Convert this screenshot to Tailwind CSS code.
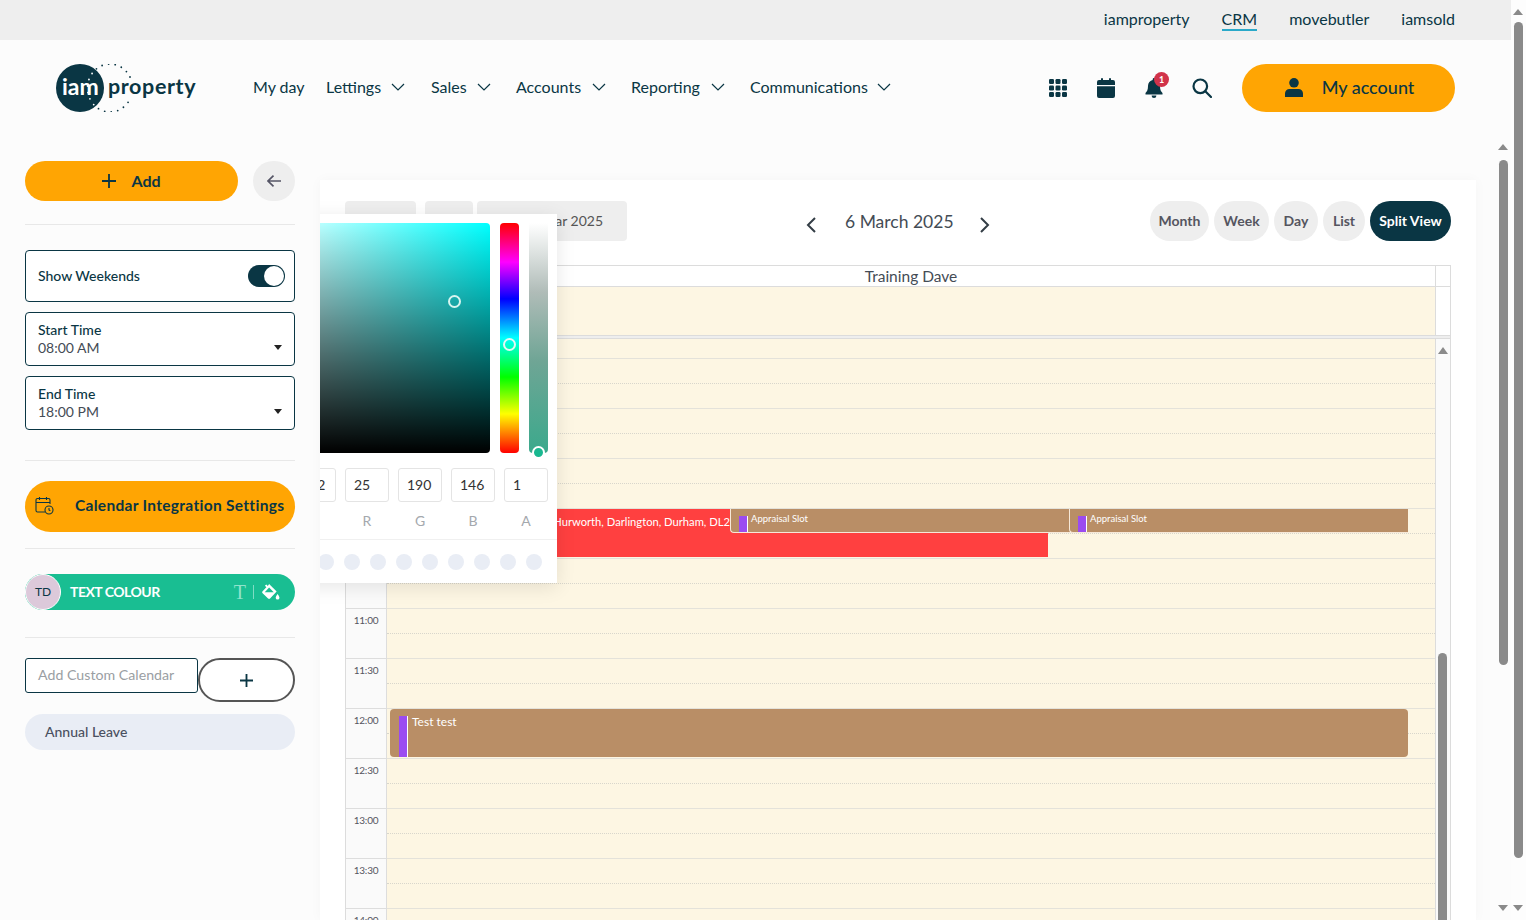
<!DOCTYPE html>
<html lang="en">
<head>
  <meta charset="UTF-8" />
  <meta name="viewport" content="width=device-width, initial-scale=1.0" />
  <title>iamproperty CRM - Calendar</title>
  <script src="https://cdn.jsdelivr.net/npm/@tailwindcss/browser@4"></script>
</head>
<body class="h-[920px] overflow-hidden bg-[#fcfcfc] text-[#0a3644] font-[Lato,sans-serif]">
<div class="flex h-[920px]">
  <div class="w-[1511px] flex flex-col shrink-0">
    <!-- top strip -->
    <div class="h-10 bg-[#eeeeee] flex justify-end items-center gap-8 pr-14 pb-0.5 text-base shrink-0">
      <a>iamproperty</a>
      <a class="relative">CRM<span class="absolute left-0 right-0 top-[22px] h-0.5 bg-[#2aa9c9]"></span></a>
      <a>movebutler</a>
      <a>iamsold</a>
    </div>
    <!-- main nav -->
    <div class="h-24 flex items-center pl-14 pr-14 shrink-0">
      <svg class="w-[145px] h-12 shrink-0" viewBox="56 64 145 48">
        <defs><clipPath id="logoClip"><circle cx="80" cy="88" r="24" /></clipPath></defs>
        <path d="M130 77A22.500 24 0 1 0 130 99" fill="none" stroke="#0a3644" stroke-width="1.800" stroke-linecap="round" stroke-dasharray="0 6.600" />
        <circle cx="80" cy="88" r="24" fill="#0a3644" />
        <path clip-path="url(#logoClip)" d="M130 77A22.500 24 0 1 0 130 99" fill="none" stroke="#fff" stroke-width="1.800" stroke-linecap="round" stroke-dasharray="0 6.600" />
        <text x="62" y="95" fill="#fff" font-size="23" font-weight="700" font-family="Lato, sans-serif">iam</text>
        <text x="108" y="94" fill="#0a3644" font-size="21.500" font-weight="700" letter-spacing="0.600" font-family="Lato, sans-serif">property</text>
      </svg>
      <nav class="flex items-center ml-[52px] text-base -mt-0.5 whitespace-nowrap">
        <a class="w-[73px]">My day</a>
        <a class="flex items-center"><span class="w-[57px]">Lettings</span><svg class="w-3.5 h-2 ml-2 mr-[26px]" viewBox="0 0 14 8" fill="none" stroke="#0a3644" stroke-width="1.200"><path d="M1 1l6 6 6-6" /></svg></a>
        <a class="flex items-center"><span class="w-[37px]">Sales</span><svg class="w-3.5 h-2 ml-[9px] mr-[25px]" viewBox="0 0 14 8" fill="none" stroke="#0a3644" stroke-width="1.200"><path d="M1 1l6 6 6-6" /></svg></a>
        <a class="flex items-center"><span class="w-[67px]">Accounts</span><svg class="w-3.5 h-2 ml-[9px] mr-[25px]" viewBox="0 0 14 8" fill="none" stroke="#0a3644" stroke-width="1.200"><path d="M1 1l6 6 6-6" /></svg></a>
        <a class="flex items-center"><span class="w-[71px]">Reporting</span><svg class="w-3.5 h-2 ml-[9px] mr-[25px]" viewBox="0 0 14 8" fill="none" stroke="#0a3644" stroke-width="1.200"><path d="M1 1l6 6 6-6" /></svg></a>
        <a class="flex items-center"><span class="w-[118px]">Communications</span><svg class="w-3.5 h-2 ml-[9px]" viewBox="0 0 14 8" fill="none" stroke="#0a3644" stroke-width="1.200"><path d="M1 1l6 6 6-6" /></svg></a>
      </nav>
      <div class="ml-auto flex items-center gap-7">
        <div class="w-5 h-5 flex items-center justify-center">
          <svg class="w-[18px] h-[18px]" viewBox="0 0 18 18" fill="#0a3644"><rect x="0" y="0" width="5" height="5" rx="1.200" /><rect x="6.500" y="0" width="5" height="5" rx="1.200" /><rect x="13" y="0" width="5" height="5" rx="1.200" /><rect x="0" y="6.500" width="5" height="5" rx="1.200" /><rect x="6.500" y="6.500" width="5" height="5" rx="1.200" /><rect x="13" y="6.500" width="5" height="5" rx="1.200" /><rect x="0" y="13" width="5" height="5" rx="1.200" /><rect x="6.500" y="13" width="5" height="5" rx="1.200" /><rect x="13" y="13" width="5" height="5" rx="1.200" /></svg>
        </div>
        <div class="w-5 h-5 flex items-center justify-center">
          <svg class="w-[18px] h-5" viewBox="0 0 18 20" fill="#0a3644"><rect x="4" y="0" width="2" height="4" rx="1" /><rect x="12" y="0" width="2" height="4" rx="1" /><path d="M2 2h14a2 2 0 0 1 2 2v3H0V4a2 2 0 0 1 2-2zM0 8.200h18V18a2 2 0 0 1-2 2H2a2 2 0 0 1-2-2z" /></svg>
        </div>
        <div class="relative w-5 h-5 flex items-center justify-center">
          <svg class="w-[18px] h-5" viewBox="0 0 18 20" fill="#0a3644"><path d="M9 0a1.300 1.300 0 0 1 1.300 1.300v.8C13 2.700 15 5 15 8c0 4 1 5.500 2.500 7v1.500H.5V15C2 13.500 3 12 3 8c0-3 2-5.300 4.700-5.900v-.8A1.300 1.300 0 0 1 9 0zM6.700 17.500h4.600A2.300 2.300 0 0 1 9 20a2.300 2.300 0 0 1-2.300-2.500z" /></svg>
          <span class="absolute -top-[6px] left-[10px] w-[15px] h-[15px] rounded-full bg-[#d1334a] text-white text-[9px] font-bold flex items-center justify-center">1</span>
        </div>
        <svg class="w-5 h-5" viewBox="0 0 20 20" fill="none" stroke="#0a3644" stroke-width="2.200"><circle cx="8.300" cy="8.300" r="6.800" /><path d="M13.300 13.300l5.700 5.700" stroke-linecap="round" /></svg>
        <button class="w-[213px] h-12 ml-[2px] pl-0.5 pb-0.5 rounded-full bg-[#ffa503] flex items-center justify-center gap-[19px] text-lg font-medium">
          <svg class="w-[18px] h-[19px]" viewBox="0 0 18 19" fill="#0a3644"><circle cx="9" cy="4.800" r="4.800" /><path d="M4.500 11h9a4.500 4.500 0 0 1 4.500 4.500V19H0v-3.500A4.500 4.500 0 0 1 4.500 11z" /></svg>
          My account
        </button>
      </div>
    </div>
    <!-- body -->
    <div class="flex flex-1 min-h-0">
      <!-- sidebar -->
      <aside class="w-80 shrink-0 pl-[25px] pr-[25px] pt-[25px]">
        <div class="flex items-center gap-[15px]">
          <button class="w-[213px] h-10 rounded-full bg-[#ffa503] flex items-center justify-center gap-[15px] font-bold text-base">
            <svg class="w-3.5 h-3.5" viewBox="0 0 14 14" stroke="#0a3644" stroke-width="1.800"><path d="M7 0v14M0 7h14" /></svg>
            Add
          </button>
          <button class="w-[42px] h-10 rounded-full bg-[#eeeeee] flex items-center justify-center">
            <svg class="w-3.5 h-3" viewBox="0 0 14 12" fill="none" stroke="#555566" stroke-width="1.700"><path d="M14 6H1M6.500.7L1 6l5.500 5.300" /></svg>
          </button>
        </div>
        <div class="h-px bg-[#e8e8e8] mt-[23px]"></div>
        <div class="mt-[25px] h-[52px] border border-[#0a3644] rounded flex items-center justify-between pl-3 pr-[9px] bg-white text-sm font-medium">
          Show Weekends
          <span class="w-[37px] h-[22px] rounded-full bg-[#0a3644] relative"><span class="absolute right-px top-px w-5 h-5 rounded-full bg-white"></span></span>
        </div>
        <div class="mt-[10px] h-[54px] border border-[#0a3644] rounded flex items-center justify-between pl-3 pr-3 bg-white">
          <div class="text-sm leading-[18px]"><div class="font-medium">Start Time</div><div class="text-[#444c55]">08:00 AM</div></div>
          <span class="mt-4 w-0 h-0 border-l-4 border-r-4 border-t-[5px] border-l-transparent border-r-transparent border-t-[#222222]"></span>
        </div>
        <div class="mt-[10px] h-[54px] border border-[#0a3644] rounded flex items-center justify-between pl-3 pr-3 bg-white">
          <div class="text-sm leading-[18px]"><div class="font-medium">End Time</div><div class="text-[#444c55]">18:00 PM</div></div>
          <span class="mt-4 w-0 h-0 border-l-4 border-r-4 border-t-[5px] border-l-transparent border-r-transparent border-t-[#222222]"></span>
        </div>
        <div class="h-px bg-[#e8e8e8] mt-[30px]"></div>
        <button class="mt-5 w-[270px] h-[51px] rounded-full bg-[#ffa503] flex items-center pl-[10px] pb-0.5 gap-[21px] font-bold text-[15.5px] tracking-[0.3px] whitespace-nowrap">
          <svg class="w-[19px] h-[19px] shrink-0" viewBox="0 0 19 19" fill="none" stroke="#0a3644" stroke-width="1.100"><path d="M10 16H2.500A1.500 1.500 0 0 1 1 14.500V4a1.500 1.500 0 0 1 1.500-1.500h11A1.500 1.500 0 0 1 15 4v4M1 6.500h14M4.500 1v3M11.500 1v3" /><circle cx="14" cy="14" r="4" /><path d="M14 12v2l1.300.8" /></svg>
          Calendar Integration Settings
        </button>
        <div class="h-px bg-[#e8e8e8] mt-4"></div>
        <div class="mt-[25px] h-9 rounded-full bg-[#19be92] relative flex items-center pl-[45px] pr-[15px] text-white">
          <span class="absolute left-0 top-0 w-9 h-9 rounded-full bg-[#dcc9da] border border-white text-[#0a3644] text-xs flex items-center justify-center">TD</span>
          <span class="font-bold text-sm tracking-[-0.5px]">TEXT COLOUR</span>
          <span class="ml-auto font-['Liberation_Serif'] text-xl text-[#8fe3cb]">T</span>
          <span class="w-px h-3.5 bg-[#7fdcc3] ml-[7px] mr-2"></span>
          <svg class="w-[18px] h-[16px]" viewBox="0 0 19 17" fill="#fff"><path d="M7.500 0l8 8-7 7.500a1.500 1.500 0 0 1-2.100 0L.6 9.700a1.500 1.500 0 0 1 0-2.100L4.600 3.500 3 1.800 4.500.4l1.600 1.700z" /><path d="M2.800 8.700h9.600L7.500 3.800z" fill="#19be92" /><path d="M16.500 10.500c1 1.600 2 2.800 2 4a2 2 0 0 1-4 0c0-1.200 1-2.400 2-4z" /></svg>
        </div>
        <div class="h-px bg-[#e8e8e8] mt-[27px]"></div>
        <div class="mt-5 flex items-start">
          <div class="w-[173px] h-[35px] border border-[#0a3644] rounded-[3px] bg-white flex items-center pl-3 pb-0.5 text-[14.2px] text-[#9a9ea3] shrink-0 whitespace-nowrap">Add Custom Calendar</div>
          <button class="w-[97px] h-11 rounded-full border-2 border-[#555555] bg-white flex items-center justify-center">
            <svg class="w-[13px] h-[13px]" viewBox="0 0 12 12" stroke="#0a3644" stroke-width="1.700"><path d="M6 0v12M0 6h12" /></svg>
          </button>
        </div>
        <div class="mt-3 h-9 rounded-full bg-[#e9edf5] flex items-center pl-5 text-sm text-[#4a5060] font-medium">Annual Leave</div>
      </aside>
      <!-- calendar panel -->
      <main class="w-[1156px] shrink-0 mt-11 bg-white pt-[21px] pl-[25px] pr-[25px] relative overflow-hidden flex flex-col shadow-[0_0_12px_rgba(0,0,0,0.03)]">
        <div class="h-10 relative flex items-center shrink-0">
          <div class="flex gap-[4px] text-sm text-[#555555]">
            <span class="w-[71px] h-10 rounded-sm bg-[#eeeeee] mr-[5px]"></span>
            <span class="w-12 h-10 rounded-sm bg-[#eeeeee]"></span>
            <span class="w-[150px] h-10 rounded-sm bg-[#eeeeee] flex items-center justify-end pr-6">Year 2025</span>
          </div>
          <div class="absolute left-[461px] top-0 h-10 flex items-center text-[#444c55]">
            <svg class="w-[10px] h-4 mt-[7px]" viewBox="0 0 10 16" fill="none" stroke="#333d45" stroke-width="2"><path d="M9 1L2 8l7 7" /></svg>
            <span class="ml-[29px] mt-0.5 text-[17.5px]">6 March 2025</span>
            <svg class="w-[10px] h-4 mt-[7px] ml-[26px]" viewBox="0 0 10 16" fill="none" stroke="#333d45" stroke-width="2"><path d="M1 1l7 7-7 7" /></svg>
          </div>
          <div class="ml-auto flex gap-[5px] text-sm font-bold text-[#555560]">
            <button class="w-[59px] h-10 rounded-full bg-[#eeeeee]">Month</button>
            <button class="w-[55px] h-10 rounded-full bg-[#eeeeee]">Week</button>
            <button class="w-11 h-10 rounded-full bg-[#eeeeee]">Day</button>
            <button class="w-[42px] h-10 rounded-full bg-[#eeeeee]">List</button>
            <button class="w-[81px] h-10 rounded-full bg-[#0a3644] text-white">Split View</button>
          </div>
        </div>
        <!-- grid -->
        <div class="mt-6 border-l border-r border-[#dcdcdc] flex flex-col flex-1 min-h-0">
          <div class="h-[22px] border-t border-b border-[#dcdcdc] flex shrink-0">
            <div class="flex-1 pl-[41px] text-center text-[15.5px] leading-[21px] text-[#444c55]">Training Dave</div>
            <div class="w-[15px] border-l border-[#dcdcdc]"></div>
          </div>
          <div class="h-12 flex shrink-0">
            <div class="flex-1 bg-[#fdf6e3]"></div>
            <div class="w-[15px] border-l border-[#dcdcdc]"></div>
          </div>
          <div class="h-1 bg-[#eeeeee] border-t border-b border-[#dcdcdc] shrink-0"></div>
          <div class="flex flex-1 min-h-0">
            <div class="flex-1 overflow-hidden">
              <div id="slots" class="-mt-[31px] relative">
                <div class="absolute left-[44px] top-[201px] w-[658px] h-12 bg-[#ff4040] text-white text-[11.2px]">
                  <div class="w-[340px] pt-[5px] text-right whitespace-nowrap overflow-hidden">Hurworth, Darlington, Durham, DL2</div>
                </div>
                <div class="absolute left-[384px] top-[201px] w-[340px] h-6 bg-[#b98e66] border-l border-b border-[#f6e8d8] rounded-bl-sm flex text-white text-[9.500px]">
                  <span class="ml-[8px] mt-[7px] w-[9px] h-4 bg-[#9b4bf0] border-r border-white"></span><span class="ml-[3px] mt-[3px]">Appraisal Slot</span>
                </div>
                <div class="absolute left-[723px] top-[201px] w-[339px] h-6 bg-[#b98e66] border-l border-b border-[#f6e8d8] rounded-bl-sm flex text-white text-[9.500px]">
                  <span class="ml-[8px] mt-[7px] w-[9px] h-4 bg-[#9b4bf0] border-r border-white"></span><span class="ml-[3px] mt-[3px]">Appraisal Slot</span>
                </div>
                <div class="absolute left-[44px] top-[401px] w-[1018px] h-12 bg-[#b98e66] rounded-sm flex text-white text-xs">
                  <span class="ml-[9px] mt-[7px] w-[9px] h-[41px] bg-[#9b4bf0] border-r border-white"></span><span class="ml-1 mt-[5px]">Test test</span>
                </div>
              </div>
            </div>
            <div class="w-[15px] border-l border-[#dcdcdc] bg-[#fafafa] relative shrink-0">
              <span class="absolute left-[2px] top-[8px] w-0 h-0 border-l-[5px] border-r-[5px] border-b-[7px] border-l-transparent border-r-transparent border-b-[#8a8a8a]"></span>
              <span class="absolute left-[2px] top-[314px] w-[9px] h-[300px] rounded-full bg-[#8a8a8a]"></span>
            </div>
          </div>
        </div>
        <!-- colour picker popover, runs in behind the sidebar edge -->
        <div class="absolute left-[-75px] top-[34px] w-[312px] h-[369px] bg-white shadow-[0_4px_18px_rgba(0,0,0,0.10)] px-[9px] pt-[9px]">
          <div class="flex gap-[10px]">
            <div class="w-[236px] h-[230px] rounded-sm relative bg-[linear-gradient(to_top,#000,transparent),linear-gradient(to_right,#fff,#00ffff)]">
              <span class="absolute left-[194px] top-[72px] w-[13px] h-[13px] rounded-full border-2 border-[#d8f5f0]"></span>
            </div>
            <div class="w-[19px] h-[230px] rounded-sm relative bg-[linear-gradient(to_bottom,#f00,#f0f_17%,#00f_33%,#0ff_50%,#0f0_67%,#ff0_83%,#f00)]">
              <span class="absolute left-[3px] top-[115px] w-[13px] h-[13px] rounded-full border-2 border-[#e4f8f4]"></span>
            </div>
            <div class="w-[19px] h-[230px] rounded-b relative bg-[linear-gradient(to_bottom,#ffffff,#b0bcb8_30%,#6fa595_60%,#3ba98c)]">
              <span class="absolute left-[3px] top-[223px] w-[13px] h-[13px] rounded-full bg-[#19b890] border-2 border-white"></span>
            </div>
          </div>
          <div class="flex justify-end gap-[9px] mt-[15px] text-sm text-[#333333]">
            <div class="w-11"><div class="h-[34px] border border-[#e4e4e4] rounded-[3px] flex items-center pl-2">162</div></div>
            <div class="w-11 text-center"><div class="h-[34px] border border-[#e4e4e4] rounded-[3px] flex items-center pl-2">25</div><div class="mt-[9px] text-[#a4a8ad]">R</div></div>
            <div class="w-11 text-center"><div class="h-[34px] border border-[#e4e4e4] rounded-[3px] flex items-center pl-2">190</div><div class="mt-[9px] text-[#a4a8ad]">G</div></div>
            <div class="w-11 text-center"><div class="h-[34px] border border-[#e4e4e4] rounded-[3px] flex items-center pl-2">146</div><div class="mt-[9px] text-[#a4a8ad]">B</div></div>
            <div class="w-11 text-center"><div class="h-[34px] border border-[#e4e4e4] rounded-[3px] flex items-center pl-2">1</div><div class="mt-[9px] text-[#a4a8ad]">A</div></div>
          </div>
          <div class="absolute left-0 right-0 top-[325px] h-px bg-[#f0f0f0]"></div>
          <div class="absolute right-[15px] top-[340px] flex gap-[10px]">
            <span class="w-4 h-4 rounded-full bg-[#e9edf5]"></span><span class="w-4 h-4 rounded-full bg-[#e9edf5]"></span><span class="w-4 h-4 rounded-full bg-[#e9edf5]"></span><span class="w-4 h-4 rounded-full bg-[#e9edf5]"></span><span class="w-4 h-4 rounded-full bg-[#e9edf5]"></span><span class="w-4 h-4 rounded-full bg-[#e9edf5]"></span><span class="w-4 h-4 rounded-full bg-[#e9edf5]"></span><span class="w-4 h-4 rounded-full bg-[#e9edf5]"></span><span class="w-4 h-4 rounded-full bg-[#e9edf5]"></span>
          </div>
        </div>
      </main>
      <div class="flex-1"></div>
      <!-- inner page scrollbar -->
      <div class="w-[15px] shrink-0 relative">
        <span class="absolute left-[2px] top-[8px] w-0 h-0 border-l-[5px] border-r-[5px] border-b-[6px] border-l-transparent border-r-transparent border-b-[#8a8a8a]"></span>
        <span class="absolute left-[3px] top-6 w-[9px] h-[505px] rounded-full bg-[#8a8a8a]"></span>
        <span class="absolute left-[2px] top-[769px] w-0 h-0 border-l-[5px] border-r-[5px] border-t-[6px] border-l-transparent border-r-transparent border-t-[#8a8a8a]"></span>
      </div>
    </div>
  </div>
  <!-- window scrollbar -->
  <div class="w-[15px] shrink-0 relative bg-[#fdfdfd]">
    <span class="absolute left-[2px] top-[9px] w-0 h-0 border-l-[5px] border-r-[5px] border-b-[6px] border-l-transparent border-r-transparent border-b-[#8a8a8a]"></span>
    <span class="absolute left-[3px] top-[22px] w-[9px] h-[836px] rounded-full bg-[#8a8a8a]"></span>
    <span class="absolute left-[2px] top-[905px] w-0 h-0 border-l-[5px] border-r-[5px] border-t-[6px] border-l-transparent border-r-transparent border-t-[#8a8a8a]"></span>
  </div>
</div>
<script>
  // half hour rows from 08:00; the earlier labels sit under the colour picker so are left out
  const slots = document.getElementById("slots");
  const rows = [];
  for (let h = 8; h <= 14; h++) {
    for (const m of ["00", "30"]) {
      const label = h >= 11 ? String(h).padStart(2, "0") + ":" + m : "";
      rows.push(`<div class="flex h-[50px]">
        <div class="w-[41px] shrink-0 bg-[#fafafa] border-r border-t border-[#dddddd] text-[10px] tracking-[-0.2px] text-[#555560] text-center pt-1">${label}</div>
        <div class="flex-1 bg-[#fdf6e3] border-t border-[#e4e2da]"><div class="h-[24px]"></div><div class="border-t border-dotted border-[#d8d6cc]"></div></div>
      </div>`);
    }
  }
  slots.insertAdjacentHTML("afterbegin", rows.join(""));
</script>
</body>
</html>
